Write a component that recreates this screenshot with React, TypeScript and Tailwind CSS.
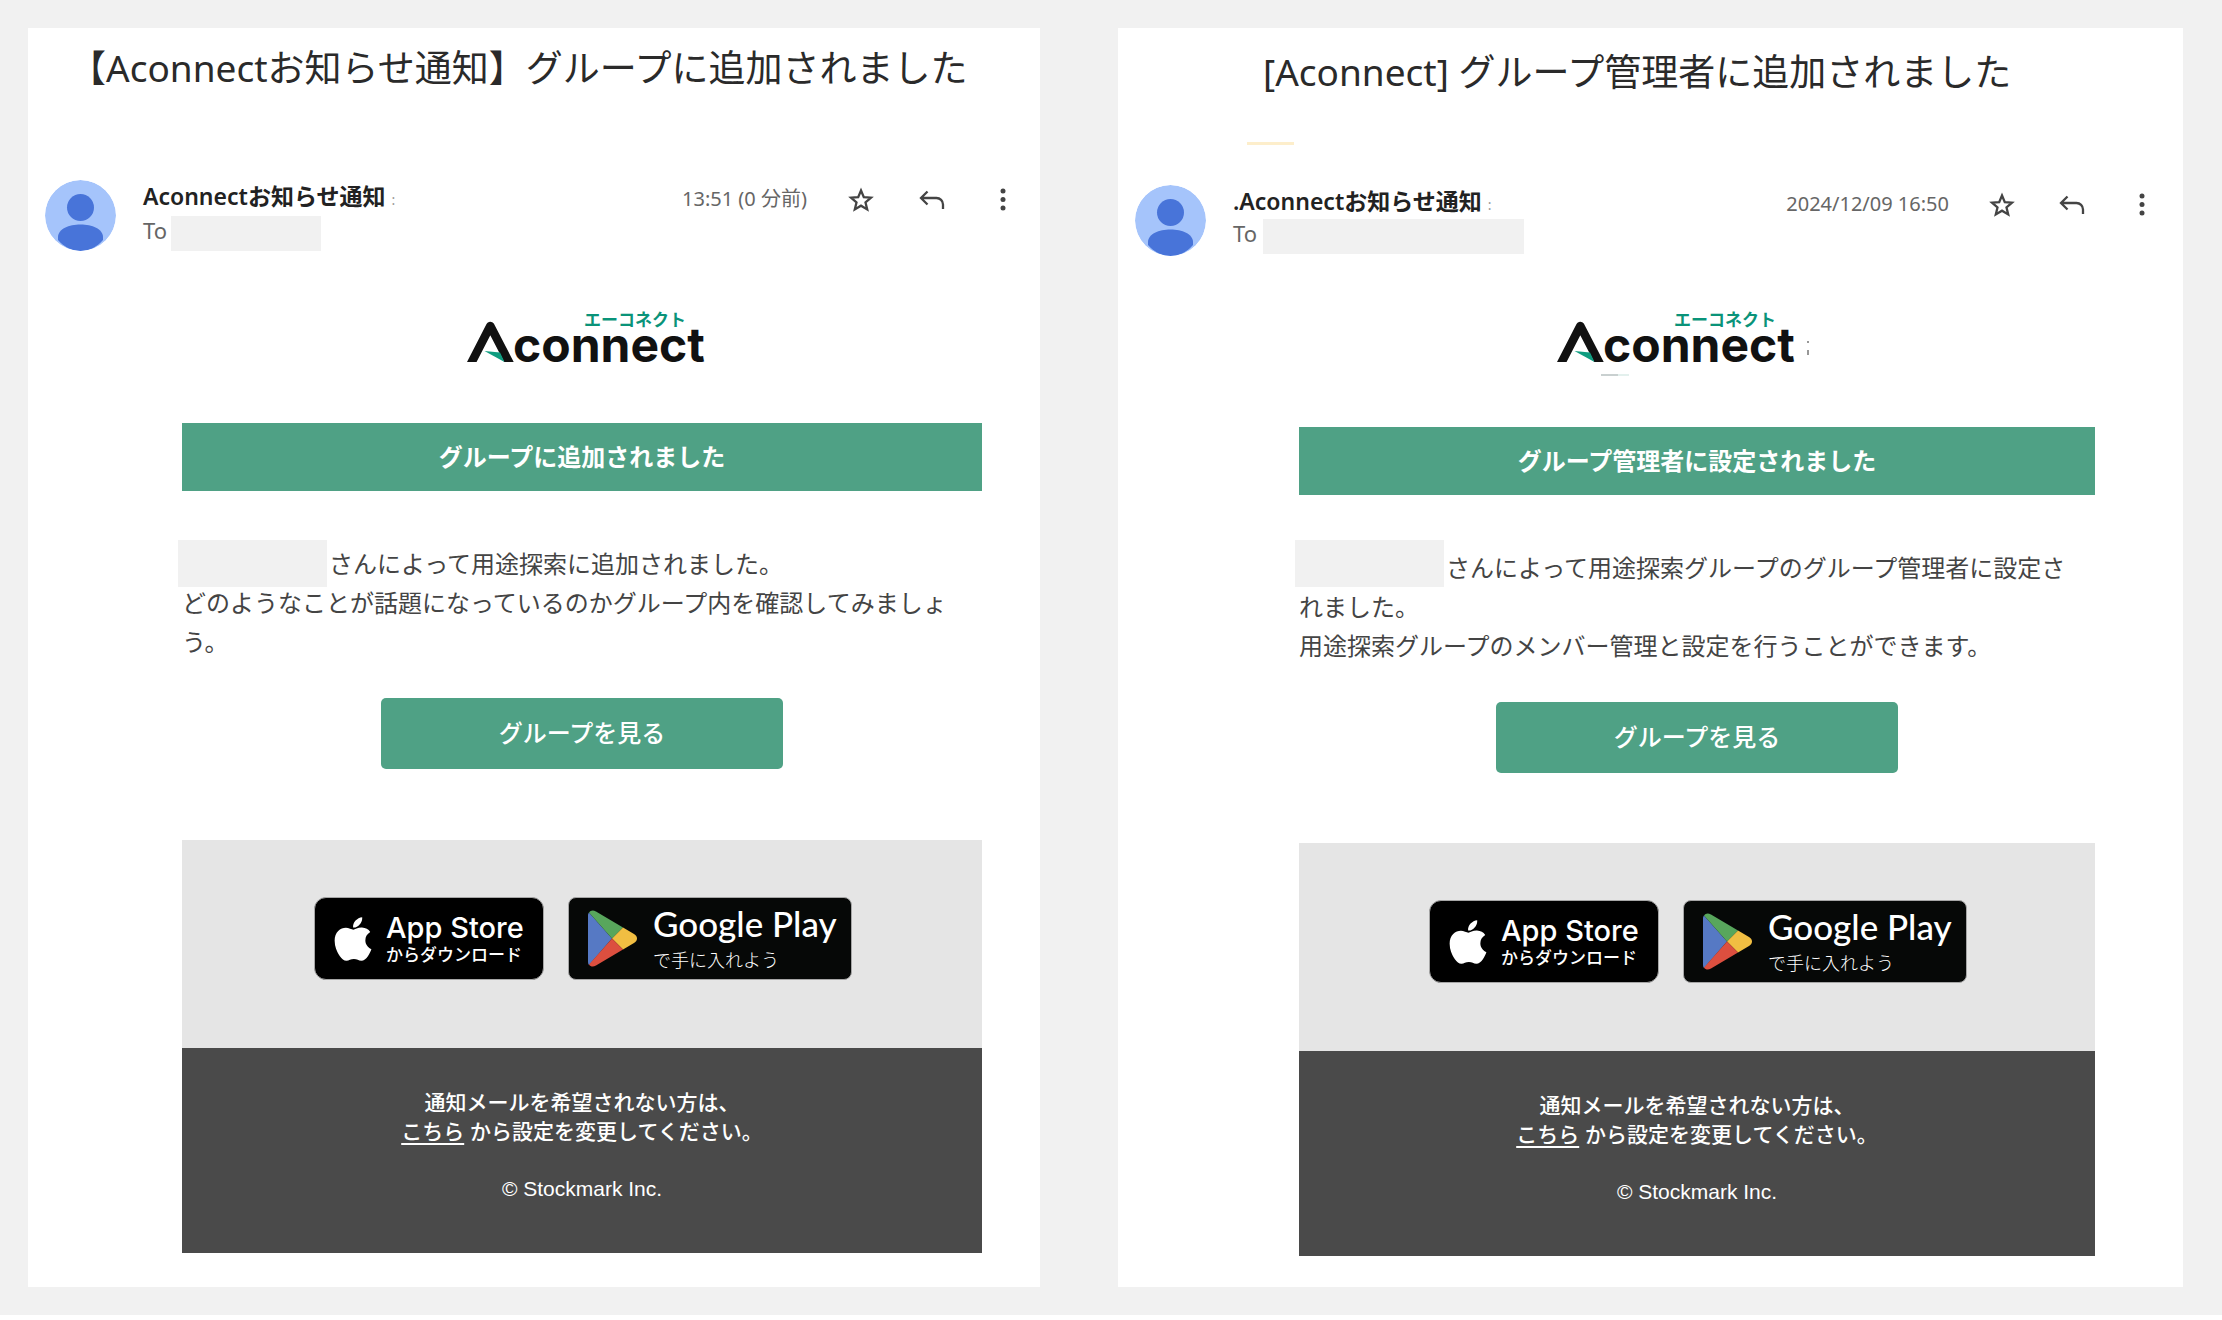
import { useId, type ReactNode } from "react";
import { FaApple } from "react-icons/fa";

type Mail = {
  id: string;
  title: string;
  titleClass: string;
  spacer: ReactNode;
  date: string;
  senderPrefix?: string;
  toRowClass: string;
  toMaskClass: string;
  iconClass: string;
  actionsClass: string;
  logoClass: string;
  logoNoise?: boolean;
  contentClass: string;
  heading: string;
  maskClass: string;
  messageClass: string;
  lines: string[];
  storeClass: string;
};

const mails: Mail[] = [
  {
    id: "added",
    title: "【Aconnectお知らせ通知】グループに追加されました",
    titleClass: "pt-4 pl-[41px]",
    spacer: <div className="h-[88px]" />,
    date: "13:51 (0 分前)",
    toRowClass: "mt-1",
    toMaskClass: "ml-1 w-[150px]",
    iconClass: "w-[71px]",
    actionsClass: "pr-0.5",
    logoClass: "pt-[61px] pb-[61px]",
    contentClass: "ml-[154px] mr-[58px]",
    heading: "グループに追加されました",
    maskClass: "-top-[3px]",
    messageClass: "pt-[52px]",
    lines: ["さんによって用途探索に追加されました。", "どのようなことが話題になっているのかグループ内を確認してみましょ", "う。"],
    storeClass: "mt-[71px]",
  },
  {
    id: "admin",
    title: "[Aconnect] グループ管理者に追加されました",
    titleClass: "pt-5 pl-[145px]",
    spacer: (
      <div className="h-[89px] pt-[46px] pl-[129px]">
        <div className="h-[3px] w-[47px] bg-[#fdeecb]" />
      </div>
    ),
    date: "2024/12/09 16:50",
    senderPrefix: ".",
    toRowClass: "mt-0.5",
    toMaskClass: "ml-1.5 w-[261px]",
    iconClass: "w-[70px]",
    actionsClass: "pr-[6px]",
    logoClass: "pt-14 pb-[65px]",
    logoNoise: true,
    contentClass: "ml-[181px] mr-[88px]",
    heading: "グループ管理者に設定されました",
    maskClass: "-top-[7px]",
    messageClass: "pt-[52px]",
    lines: ["さんによって用途探索グループのグループ管理者に設定さ", "れました。", "用途探索グループのメンバー管理と設定を行うことができます。"],
    storeClass: "mt-[70px]",
  },
];

function Avatar() {
  const clipId = useId();
  return (
    <svg viewBox="0 0 71 71" className="h-[71px] w-[71px] shrink-0" aria-hidden="true">
      <clipPath id={clipId}>
        <circle cx="35.5" cy="35.5" r="35.5" />
      </clipPath>
      <g clipPath={`url(#${clipId})`}>
        <circle cx="35.5" cy="35.5" r="35.5" fill="#a5c4fb" />
        <circle cx="35.5" cy="27.5" r="13.5" fill="#4874d9" />
        <path d="M13 57c0-8 11-12.500 22.500-12.500S58 49 58 57v3c-6 7-14 11-22.500 11S19 67 13 60z" fill="#4874d9" />
      </g>
    </svg>
  );
}

function Logo({ noise }: { noise?: boolean }) {
  const clipId = useId();
  return (
    <svg viewBox="0 0 260 50" className="ml-[439px] h-[50px] w-[260px] overflow-visible" role="img" aria-label="Aconnect">
      <clipPath id={clipId}>
        <rect x="0" y="0" width="50" height="50" />
      </clipPath>
      <path d="M2.700 54 23.300 14 44 54" clipPath={`url(#${clipId})`} fill="none" stroke="#111" strokeWidth="8.500" strokeLinejoin="round" />
      <path d="M17.500 39 33 40.500 37.500 50z" fill="#0f9d80" />
      <text x="46" y="50" fontSize="48" fontWeight="700" fill="#111" fontFamily="Inter, sans-serif">
        connect
      </text>
      <text x="117" y="14" fontSize="17" fontWeight="700" fill="#0a9379" fontFamily="'Noto Sans CJK JP', sans-serif">
        エーコネクト
      </text>
      {noise && (
        <g>
          <path d="M44 63h17" stroke="#c9d0d0" strokeWidth="2" />
          <path d="M61 63h11" stroke="#e3f0ed" strokeWidth="2" />
          <path d="M251 29v2M251 38v5" stroke="#777" strokeWidth="1.500" />
        </g>
      )}
    </svg>
  );
}

function IconButton({ label, className, children }: { label: string; className: string; children: ReactNode }) {
  return (
    <button type="button" aria-label={label} className={`flex h-8 items-center justify-center text-[#444] ${className}`}>
      <svg viewBox="0 0 30 30" className="h-[30px] w-[30px]" fill="none" stroke="currentColor" strokeWidth="2.300">
        {children}
      </svg>
    </button>
  );
}

function AppStoreBadge() {
  return (
    <a href="#app-store" className="flex h-[83px] w-[230px] items-center rounded-[12px] border border-[#a6a6a6] bg-black pl-4 text-white">
      <FaApple className="h-[50px] w-[44px] shrink-0" />
      <span className="ml-[11px] flex flex-col">
        <span className="font-['Inter',sans-serif] text-[29px] leading-[30px] font-medium whitespace-nowrap">App Store</span>
        <span className="text-[17px] leading-[22px] font-medium whitespace-nowrap">からダウンロード</span>
      </span>
    </a>
  );
}

function GooglePlayBadge() {
  return (
    <a href="#google-play" className="flex h-[83px] w-[284px] items-center rounded-[8px] border border-[#a6a6a6] bg-[#060807] pl-[19px] text-white">
      <svg viewBox="0 0 50 57" className="h-[57px] w-[50px] shrink-0" aria-hidden="true">
        <path d="M0 5v47c0 1.200.3 2.200 1 3L24 28.500 1 2.500C.3 3.300 0 4 0 5z" fill="#5679c4" />
        <path d="M1 2.500 24 28.500 35 17.500 8 1.500C5 -.3 2.500.3 1 2.500z" fill="#58a65c" />
        <path d="M24 28.500 35 17.500 46 24c4 2.500 4 6.500 0 9L35 39.500z" fill="#f1be42" />
        <path d="M1 54.500 24 28.500 35 39.500 8 55.500C5 57.300 2.500 56.700 1 54.500z" fill="#dc4f3f" />
      </svg>
      <span className="ml-[15px] flex flex-col">
        <span className="font-['Lato',sans-serif] text-[35px] leading-9 font-medium whitespace-nowrap">Google Play</span>
        <span className="pt-1 text-[18px] leading-7 font-light whitespace-nowrap">で手に入れよう</span>
      </span>
    </a>
  );
}

function MailCard({ mail }: { mail: Mail }) {
  return (
    <article className="bg-white pb-[31px]">
      <h1 className={`font-['Noto_Sans','Noto_Sans_CJK_JP',sans-serif] text-[37px] leading-[48px] whitespace-nowrap text-[#2a2a2a] ${mail.titleClass}`}>{mail.title}</h1>
      {mail.spacer}

      <header className="flex items-start pl-[17px] font-['Noto_Sans','Noto_Sans_CJK_JP',sans-serif]">
        <Avatar />
        <div className="ml-[27px]">
          <p className="flex items-baseline text-[23px] leading-8 font-semibold whitespace-nowrap text-[#222]">
            {mail.senderPrefix}Aconnectお知らせ通知
            <span className="ml-1.5 text-sm font-normal text-[#999]">:</span>
          </p>
          <div className={`flex h-[35px] items-start text-[22px] leading-[29px] text-[#666] ${mail.toRowClass}`}>
            To
            <span className={`h-[35px] bg-[#f1f1f1] ${mail.toMaskClass}`} />
          </div>
        </div>
        <div className={`ml-auto flex items-center pt-[3px] ${mail.actionsClass}`}>
          <time className="mr-[18px] pb-0.5 text-[20px] leading-8 whitespace-nowrap text-[#666]">{mail.date}</time>
          <IconButton label="スターを付ける" className={mail.iconClass}>
            <path d="M15 5.500 17.800 12.100 25 12.700 19.500 17.400 21.200 24.400 15 20.700 8.800 24.400 10.500 17.400 5 12.700 12.200 12.100z" />
          </IconButton>
          <IconButton label="返信" className={mail.iconClass}>
            <path d="M10.500 6.500 4 13l6.500 6.500M4 13h15.500a6.500 6.500 0 0 1 6.500 6.500v4.500" />
          </IconButton>
          <IconButton label="その他" className={mail.iconClass}>
            <g fill="currentColor" stroke="none">
              <circle cx="15" cy="6" r="2.500" />
              <circle cx="15" cy="14.500" r="2.500" />
              <circle cx="15" cy="23" r="2.500" />
            </g>
          </IconButton>
        </div>
      </header>

      <div className={mail.logoClass}>
        <Logo noise={mail.logoNoise} />
      </div>

      <div className={mail.contentClass}>
        <h2 className="bg-[#4fa185] pb-[3px] text-center text-[24px] leading-[65px] font-bold text-white">{mail.heading}</h2>

        <div className={`text-[24px] leading-[39px] whitespace-nowrap text-[#444] ${mail.messageClass}`}>
          <p className="relative pl-[147px]">
            <span className={`absolute -left-1 h-[47px] w-[149px] bg-[#f1f1f1] ${mail.maskClass}`} />
            {mail.lines[0]}
          </p>
          <p>{mail.lines[1]}</p>
          <p>{mail.lines[2]}</p>
        </div>

        <button type="button" className="mx-auto mt-[38px] block h-[71px] w-[402px] rounded-[5px] bg-[#4fa185] pb-[3px] text-[24px] font-medium text-white">
          グループを見る
        </button>

        <div className={`flex h-[208px] justify-center gap-6 bg-[#e5e5e5] pt-[57px] pl-0.5 ${mail.storeClass}`}>
          <AppStoreBadge />
          <GooglePlayBadge />
        </div>

        <footer className="h-[205px] bg-[#4a4a4a] pt-10 text-center font-['Liberation_Sans','Noto_Sans_CJK_JP',sans-serif] text-[21px] leading-[29px] font-medium text-white">
          <p>通知メールを希望されない方は、</p>
          <p>
            <a href="#settings" className="underline underline-offset-4">こちら</a> から設定を変更してください。
          </p>
          <p className="mt-7">© Stockmark Inc.</p>
        </footer>
      </div>
    </article>
  );
}

export default function App() {
  return (
    <div lang="ja" className="bg-white font-['Noto_Sans_CJK_JP',sans-serif]">
      <main className="grid grid-cols-[1012fr_1065fr] gap-[78px] bg-[#f1f1f1] pt-7 pr-[39px] pb-7 pl-7">
        {mails.map((mail) => (
          <MailCard key={mail.id} mail={mail} />
        ))}
      </main>
    </div>
  );
}
